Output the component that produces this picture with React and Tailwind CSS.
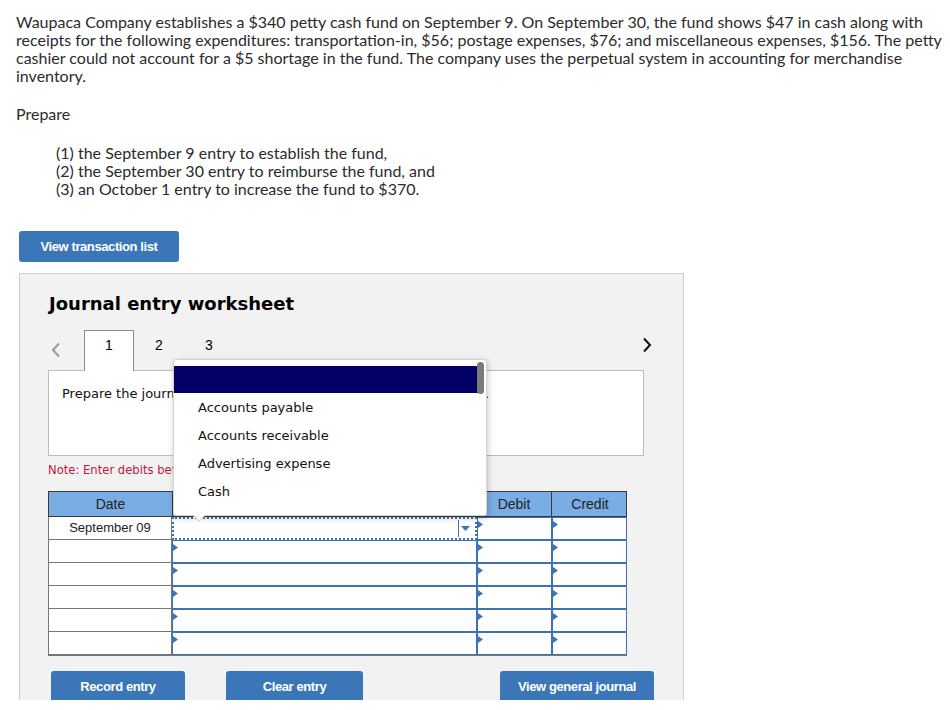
import { useState } from "react";

const accounts = [
  "Accounts payable",
  "Accounts receivable",
  "Advertising expense",
  "Cash",
];

// small blue marker shown at top-left of every editable cell
function CellFlag() {
  return (
    <svg className="absolute left-0 top-[3px]" width="5" height="7" viewBox="0 0 5 7">
      <path d="M0 0 L5 3.5 L0 7 Z" fill="#3d74b8" />
    </svg>
  );
}

function InputCell({ children }) {
  return (
    <div className="relative h-[23px] border border-[#3d72b4] bg-white">
      <CellFlag />
      {children}
    </div>
  );
}

function BlueButton({ children, className = "" }) {
  return (
    <button
      className={`h-[31px] rounded-[3px] bg-[#3a76b8] text-[13px] font-bold text-white tracking-[-0.4px] ${className}`}
      style={{ fontFamily: '"Liberation Sans Narrow", "Liberation Sans", Arial, sans-serif' }}
    >
      {children}
    </button>
  );
}

export default function App() {
  const [tab, setTab] = useState(1);
  const rows = ["September 09", "", "", "", "", ""];

  return (
    <div className="h-[710px] w-[950px] bg-white">
      <div className="h-[700px] overflow-hidden">
        {/* Problem statement */}
        <div
          className="px-4 pt-[13px] text-[16px] leading-[18px] text-[#2b2b2b]"
          style={{ fontFamily: "Lato, 'Open Sans', sans-serif" }}
        >
          <p className="whitespace-nowrap">
            Waupaca Company establishes a $340 petty cash fund on September 9. On September 30, the fund shows $47 in cash along with
            <br />
            receipts for the following expenditures: transportation-in, $56; postage expenses, $76; and miscellaneous expenses, $156. The petty
            <br />
            cashier could not account for a $5 shortage in the fund. The company uses the perpetual system in accounting for merchandise
            <br />
            inventory.
          </p>
          <p className="mt-[20px]">Prepare</p>
          <div className="mt-[21px] pl-10">
            <p>(1) the September 9 entry to establish the fund,</p>
            <p>(2) the September 30 entry to reimburse the fund, and</p>
            <p>(3) an October 1 entry to increase the fund to $370.</p>
          </div>
        </div>

        <div className="mt-[33px] pl-[19px]">
          <BlueButton className="w-[160px]">View transaction list</BlueButton>
        </div>

        {/* Worksheet panel */}
        <div className="relative ml-[19px] mt-[11px] h-[460px] w-[665px] border border-[#cfcfcf] bg-[#f2f2f2] pl-[28px]">
          <h2
            className="pl-px pt-[18px] text-[18px] font-bold leading-[24px] text-black"
            style={{ fontFamily: '"DejaVu Sans", Verdana, sans-serif' }}
          >
            Journal entry worksheet
          </h2>

          <div className="mt-[14px] flex h-[40px] w-[596px] items-end text-[14px] text-black" style={{ fontFamily: '"Liberation Sans", Arial, sans-serif' }}>
            <div className="flex h-[40px] w-[36px] items-center pl-[3px]">
              <svg width="10" height="16" viewBox="0 0 10 16">
                <path d="M8 1.5 L2 8 L8 14.5" fill="none" stroke="#9a9a9a" strokeWidth="2" />
              </svg>
            </div>
            {[1, 2, 3].map((n) => (
              <button
                key={n}
                onClick={() => setTab(n)}
                className={
                  n === tab
                    ? "relative z-10 -mb-px flex h-[41px] w-[50px] items-center justify-center border border-b-0 border-[#8c8c8c] bg-white pb-[12px]"
                    : "flex h-[40px] w-[50px] items-center justify-center pb-[10px]"
                }
              >
                {n}
              </button>
            ))}
            <div className="ml-auto mr-[-8px] flex h-[40px] items-center pb-[10px]">
              <svg width="10" height="16" viewBox="0 0 10 16">
                <path d="M2 1.5 L8 8 L2 14.5" fill="none" stroke="#111" strokeWidth="2" />
              </svg>
            </div>
          </div>

          <div
            className="h-[86px] w-[596px] border border-[#bcbcbc] bg-white pl-[13px] pt-[13px] text-[13px] text-[#111]"
            style={{ fontFamily: '"DejaVu Sans", Verdana, sans-serif' }}
          >
            Prepare the journal entry to record the establishment of the fund.
          </div>

          <p
            className="mt-[6px] text-[11.6px] leading-[16px] text-[#c0183c]"
            style={{ fontFamily: '"DejaVu Sans", Verdana, sans-serif' }}
          >
            Note: Enter debits before credits.
          </p>

          {/* Journal table */}
          <div
            className="mt-[13px] w-[579px] text-[14px] text-[#222]"
            style={{ fontFamily: '"Liberation Sans", Arial, sans-serif' }}
          >
            <div className="grid h-[26px] grid-cols-[124px_304px_75px_76px] border border-[#3a3a3a] bg-[#79ade3]">
              <div className="flex items-center justify-center border-r border-[#3a3a3a]">Date</div>
              <div className="flex items-center justify-center border-r border-[#3a3a3a]">Account Title</div>
              <div className="flex items-center justify-center border-r border-[#3a3a3a]">Debit</div>
              <div className="flex items-center justify-center">Credit</div>
            </div>
            <div className="border-x border-b border-[#777]">
              {rows.map((d, i) => (
                <div key={i} className="grid grid-cols-[123px_305px_75px_75px]">
                  <div className="flex h-[23px] items-center justify-center border-b border-r border-[#777] bg-white text-[13px] last:border-b-0">
                    {d}
                  </div>
                  {i === 0 ? (
                    <div className="relative h-[23px] border-2 border-dotted border-[#3d72b4] bg-white">
                      <div className="absolute right-[16px] top-[1px] h-[17px] w-px bg-[#3d72b4]" />
                      <svg className="absolute right-[5px] top-[7px]" width="9" height="5" viewBox="0 0 9 5">
                        <path d="M0 0 L9 0 L4.5 5 Z" fill="#3d72b4" />
                      </svg>
                    </div>
                  ) : (
                    <InputCell />
                  )}
                  <InputCell />
                  <InputCell />
                </div>
              ))}
            </div>
          </div>

          <div className="mt-[15px] flex w-[606px] items-start">
            <BlueButton className="ml-[3px] w-[134px]">Record entry</BlueButton>
            <BlueButton className="ml-[41px] w-[137px]">Clear entry</BlueButton>
            <BlueButton className="ml-auto w-[154px]">View general journal</BlueButton>
          </div>

          {/* Account dropdown, open over the table */}
          <div
            className="absolute left-[153px] top-[85px] z-20 h-[157px] w-[314px] rounded-[3px] border border-[#d4d4d4] bg-white shadow-[1px_2px_6px_rgba(0,0,0,0.22)]"
            style={{ fontFamily: '"DejaVu Sans", Verdana, sans-serif' }}
          >
            <div className="mt-[6px] h-[27px] w-[305px] bg-[#020066]" />
            <div className="absolute right-[2px] top-[2px] h-[32px] w-[7px] rounded-full bg-[#7a7a7a]" />
            <ul className="pl-[24px] pt-[1px] text-[13px] text-[#111]">
              {accounts.map((a) => (
                <li key={a} className="flex h-[28px] items-center">
                  {a}
                </li>
              ))}
            </ul>
            <div className="absolute bottom-[-5px] left-[21px] h-[8px] w-[8px] rotate-45 border-b border-r border-[#d4d4d4] bg-white" />
          </div>
        </div>
      </div>
    </div>
  );
}
